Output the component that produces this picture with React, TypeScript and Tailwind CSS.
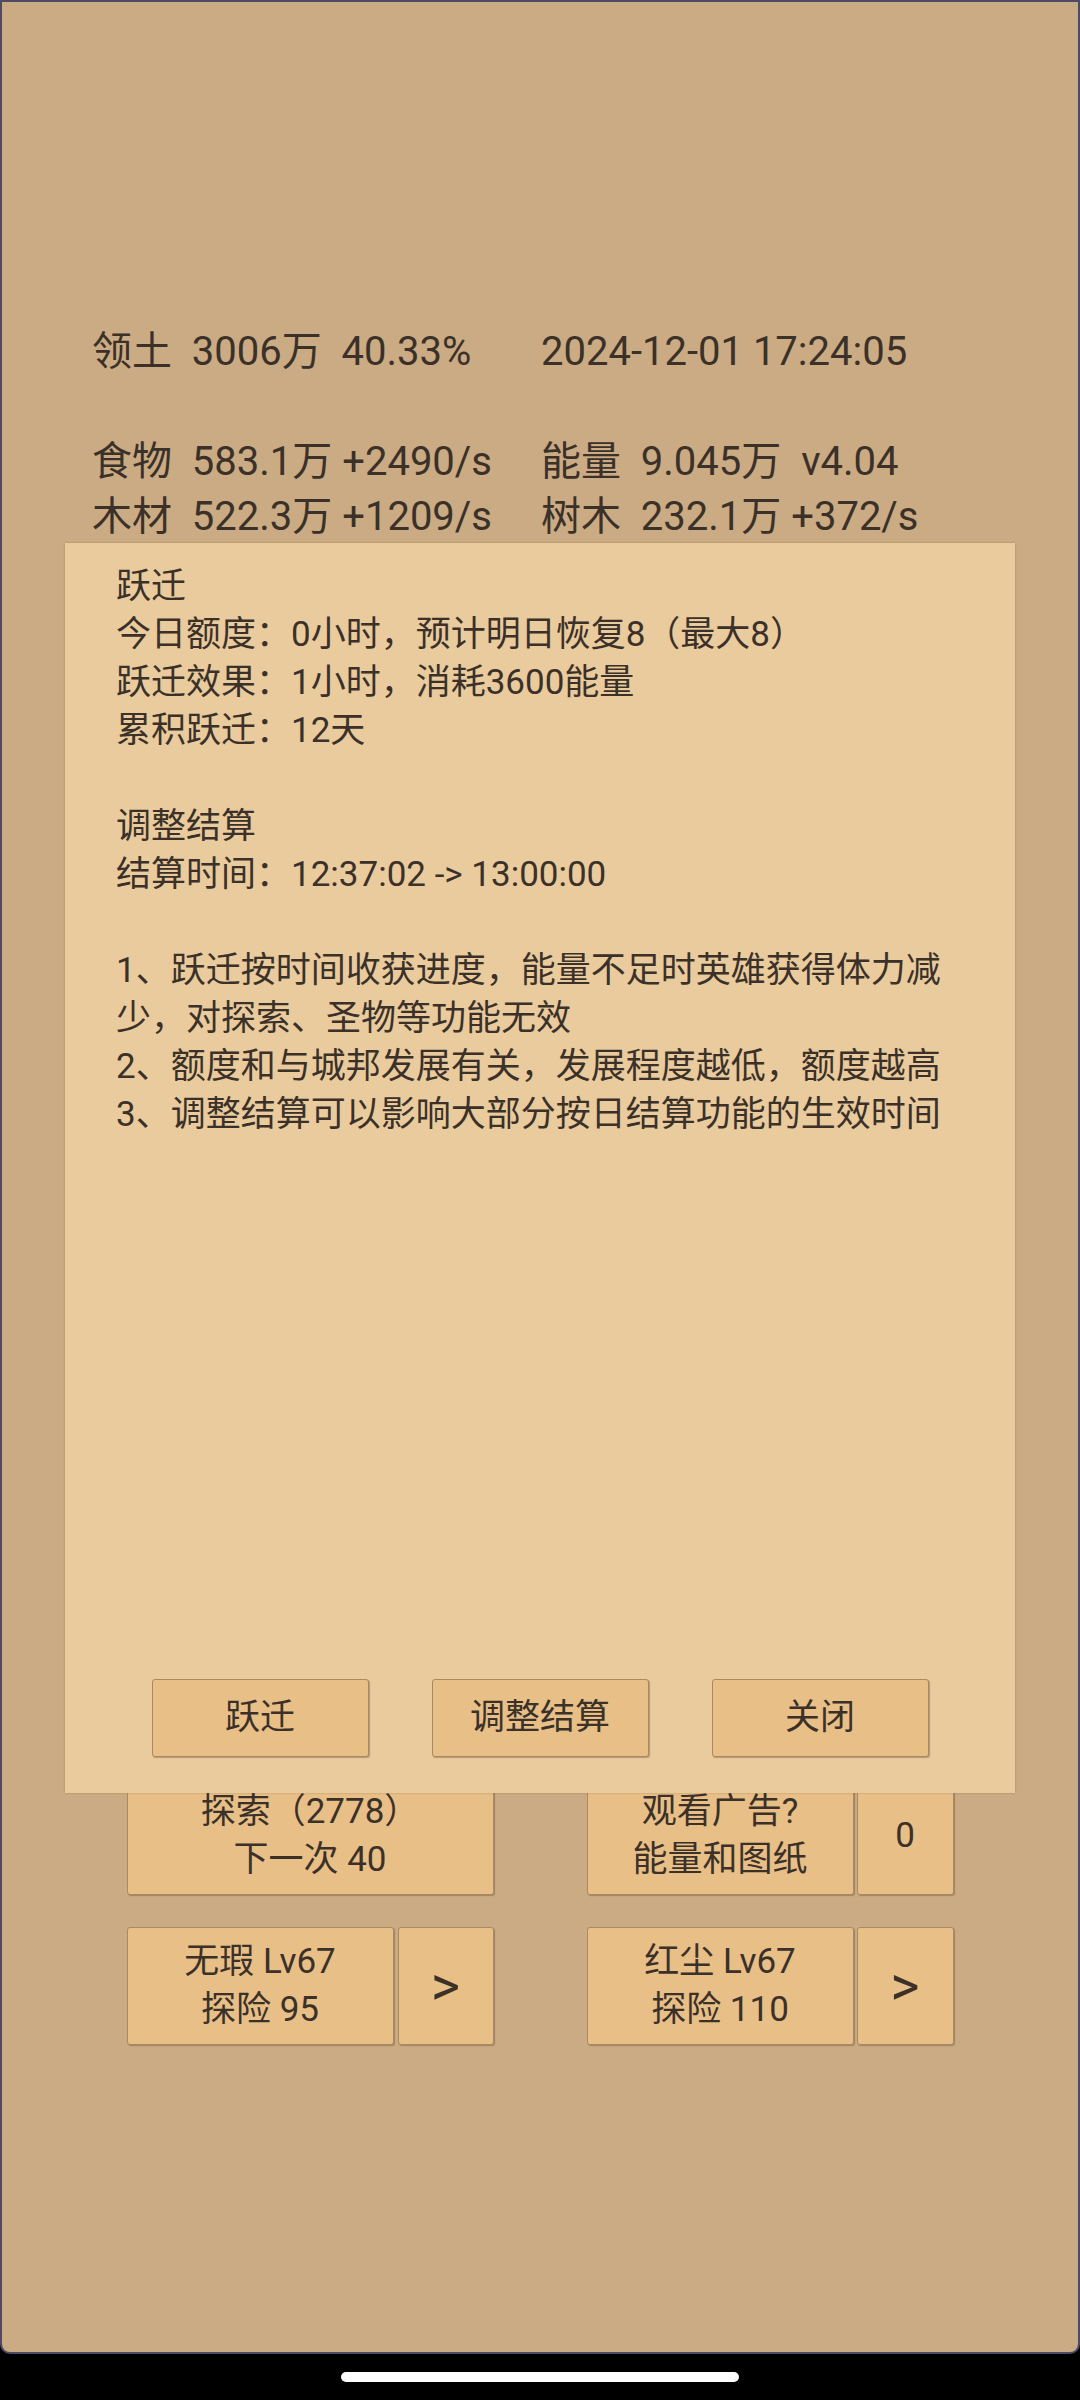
import React from "react";

const FONT = "font-['Roboto','Noto_Sans_CJK_SC',sans-serif]";

const stats: [string, string][] = [
  ["领土  3006万  40.33%", "2024-12-01 17:24:05"],
  ["", ""],
  ["食物  583.1万 +2490/s", "能量  9.045万  v4.04"],
  ["木材  522.3万 +1209/s", "树木  232.1万 +372/s"],
];

const modalText = `跃迁
今日额度：0小时，预计明日恢复8（最大8）
跃迁效果：1小时，消耗3600能量
累积跃迁：12天

调整结算
结算时间：12:37:02 -> 13:00:00

1、跃迁按时间收获进度，能量不足时英雄获得体力减少，对探索、圣物等功能无效
2、额度和与城邦发展有关，发展程度越低，额度越高
3、调整结算可以影响大部分按日结算功能的生效时间`;

function Btn({
  children,
  className = "",
}: {
  children: React.ReactNode;
  className?: string;
}) {
  return (
    <div
      className={`flex flex-col items-center justify-center rounded-[3px] border border-[#a98a62] bg-[#e8bf87] text-[35px] leading-[48px] text-[#3b3128] shadow-[1px_1px_1px_rgba(90,60,30,0.35)] ${className}`}
    >
      {children}
    </div>
  );
}

export default function App() {
  return (
    <div className={`relative h-[2400px] w-[1080px] bg-black ${FONT}`}>
      {/* game screen */}
      <div className="relative h-[2354px] w-full rounded-b-[10px] border-2 border-[#4d4b66] bg-[#caab83] text-[#3b3128]">
        {/* resource stats */}
        <div className="pl-[90px] pt-[322px] text-[40px] leading-[55px]">
          {stats.map(([a, b], i) => (
            <div key={i} className="grid h-[55px] grid-cols-[449px_1fr] whitespace-pre">
              <span>{a}</span>
              <span>{b}</span>
            </div>
          ))}
        </div>

        {/* action buttons (partly under the dialog) */}
        <div className="mx-auto mt-[1233px] grid w-[827px] grid-cols-2 gap-x-[93px] gap-y-[32px]">
          <Btn className="h-[118px]">
            <span>探索（2778）</span>
            <span>下一次 40</span>
          </Btn>
          <div className="flex h-[118px] gap-[3px]">
            <Btn className="w-[267px]">
              <span>观看广告?</span>
              <span>能量和图纸</span>
            </Btn>
            <Btn className="flex-1">0</Btn>
          </div>
          <div className="flex h-[118px] gap-[4px]">
            <Btn className="w-[267px]">
              <span>无瑕 Lv67</span>
              <span>探险 95</span>
            </Btn>
            <Btn className="flex-1 text-[56px]">&gt;</Btn>
          </div>
          <div className="flex h-[118px] gap-[3px]">
            <Btn className="w-[267px]">
              <span>红尘 Lv67</span>
              <span>探险 110</span>
            </Btn>
            <Btn className="flex-1 text-[56px]">&gt;</Btn>
          </div>
        </div>

        {/* dialog */}
        <div className="absolute left-[63px] top-[541px] flex h-[1250px] w-[950px] flex-col bg-[#e9cb9e] shadow-[0_0_2px_rgba(120,90,50,0.4)]">
          <div className="box-content w-[840px] whitespace-pre-wrap pl-[51px] pt-[20px] text-[35px] leading-[48px] text-[#3b3128]">
            {modalText}
          </div>
          <div className="mt-auto flex justify-center gap-[63px] pb-[36px]">
            <Btn className="h-[78px] w-[217px]">跃迁</Btn>
            <Btn className="h-[78px] w-[217px]">调整结算</Btn>
            <Btn className="h-[78px] w-[217px]">关闭</Btn>
          </div>
        </div>
      </div>

      {/* navigation pill */}
      <div className="flex h-[46px] items-center justify-center">
        <div className="h-[10px] w-[398px] rounded-full bg-white" />
      </div>
    </div>
  );
}
